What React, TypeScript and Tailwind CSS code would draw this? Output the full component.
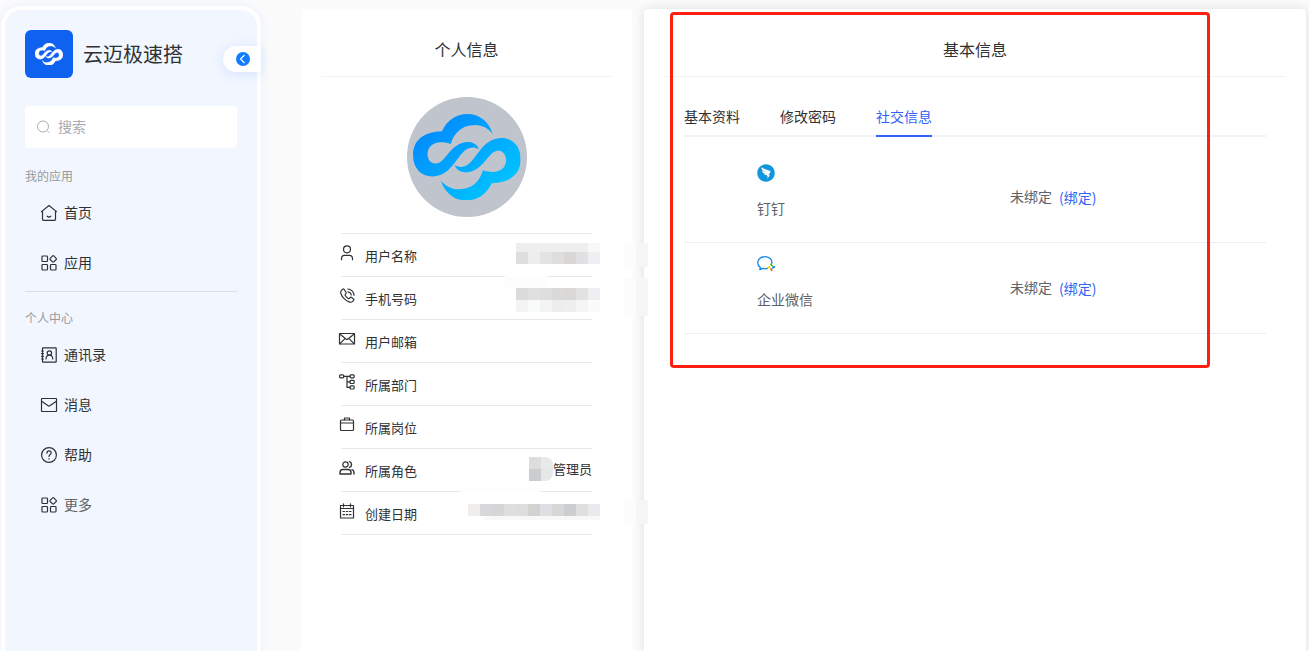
import { useState, type ReactNode } from "react";
import { AiFillDingtalkCircle } from "react-icons/ai";

function Icon({ children }: { children: ReactNode }) {
  return (
    <svg
      className="h-4 w-4 shrink-0 overflow-visible"
      viewBox="0 0 16 16"
      fill="none"
      stroke="currentColor"
      strokeWidth={1.2}
      strokeLinecap="round"
      strokeLinejoin="round"
      aria-hidden="true"
    >
      {children}
    </svg>
  );
}

const HomeIcon = (
  <Icon>
    <path d="M.5 6.6 8 .5l7.5 6.1M1.5 6v8.3a1 1 0 0 0 1 1h11a1 1 0 0 0 1-1V6M6.2 11.2c.9.8 2.7.8 3.6 0" />
  </Icon>
);

const AppsIcon = (
  <Icon>
    <rect x="1" y="1" width="5.5" height="5.5" rx=".8" />
    <rect x="1" y="9.5" width="5.5" height="5.5" rx=".8" />
    <rect x="9.5" y="9.5" width="5.5" height="5.5" rx=".8" />
    <path d="M11.6.9 9.2 3.300a.9.9 0 0 0 0 1.200l2.400 2.400a.9.9 0 0 0 1.200 0l2.400-2.400a.9.9 0 0 0 0-1.200L12.800.9a.9.9 0 0 0-1.200 0z" />
  </Icon>
);

const ContactsIcon = (
  <Icon>
    <rect x="1.5" y=".8" width="13.7" height="14.4" rx=".5" />
    <path d="M.6 4h1.800M.6 6.600h1.800M.6 9.300h1.800M.6 12h1.800" />
    <circle cx="8.4" cy="6" r="2.2" />
    <path d="M5 12c.2-2.500 1.600-3.800 3.400-3.800s3.200 1.300 3.400 3.800" />
  </Icon>
);

const MessageIcon = (
  <Icon>
    <rect x=".5" y="1.5" width="15" height="13" rx=".4" />
    <path d="m1 4.500 6.200 4.300c.5.400 1.100.4 1.600 0L15 4.500" />
  </Icon>
);

const HelpIcon = (
  <Icon>
    <circle cx="8" cy="8" r="7.4" />
    <path d="M5.900 6.200C6 4.700 6.800 3.900 8 3.900s2.200.8 2.200 2c0 1.500-2.200 1.800-2.200 3.600M8 11.600v.4" />
  </Icon>
);

const UserIcon = (
  <Icon>
    <circle cx="8" cy="4.3" r="3.5" />
    <path d="M2.500 14.700v-1.200c0-2 1.300-3.200 3.100-3.200h4.800c1.800 0 3.100 1.200 3.100 3.200v1.200" />
  </Icon>
);

const PhoneIcon = (
  <Icon>
    <path d="M3.700 1.200 2.200 2.600C.9 3.900 2 7.500 5.200 10.700s6.900 4.300 8.200 3l1.200-1.300c.4-.4.4-1-.1-1.400l-1.800-1.500c-.4-.4-1-.4-1.400 0l-.9.9c-.3.300-.8.4-1.200.1-1.100-.7-2.300-1.900-3-3-.3-.4-.2-.9.1-1.200l.6-.7c.4-.4.4-1 0-1.400L5.100 1.300c-.4-.4-1-.4-1.400-.1z" />
    <path d="M8.800 1c3.300.2 6 2.900 6.200 6.200M9 3.800c1.700.2 3 1.500 3.200 3.200" />
  </Icon>
);

const EnvelopeIcon = (
  <Icon>
    <rect x=".5" y="2.5" width="15" height="10.5" rx=".3" />
    <path d="m.8 3 6.200 5c.6.500 1.400.5 2 0l6.200-5M1 12.600l4.500-4.500M15 12.600l-4.500-4.500" />
  </Icon>
);

const TreeIcon = (
  <Icon>
    <rect x=".6" y=".8" width="4.2" height="3" rx="1" />
    <rect x="11" y=".8" width="4.2" height="3" rx="1" />
    <rect x="11" y="6.3" width="4.2" height="3.2" rx="1" />
    <rect x="11" y="11.8" width="4.2" height="3.2" rx="1" />
    <path d="M4.800 2.300H11M8 2.300v11.100h3M8 7.900h3" />
  </Icon>
);

const BriefcaseIcon = (
  <Icon>
    <rect x="1.5" y="3" width="13" height="10.5" rx="1" />
    <path d="M5.500 3V1h5v2M1.500 6h13" />
  </Icon>
);

const RolesIcon = (
  <Icon>
    <circle cx="6.5" cy="4.5" r="2.7" />
    <path
      d="M1 14v-1.500C1 10.600 2.400 9.500 4 9.500h5c1.600 0 3 1.100 3 3V14zM10.500 1.600c1.300.4 2 1.500 2 2.900s-.7 2.500-2 2.900M13 9.700c1.200.5 2 1.500 2 2.800V14"
      strokeWidth={1.4}
    />
  </Icon>
);

const CalendarIcon = (
  <Icon>
    <rect x="1.5" y="2.5" width="13" height="12.5" />
    <path d="M4.500.8v3M11.500.8v3M1.500 5.500h13" />
    <path d="M4 8.500h1.500M7.300 8.500h1.500M10.500 8.500H12M4 11.700h1.500M7.300 11.700h1.500M10.500 11.700H12" />
  </Icon>
);

// one half of the knotted cloud; the other half is the same shape turned round
const KNOT =
  "M281 135C268 96 240 75 206 75 170 75 144 95 130 126 80 127 44 150 44 196 44 240 72 262 104 260 142 257 158 232 180 203 198 179 214 167 240 179 232 162 218 158 206 158 182 158 165 173 148 193 130 215 124 222 108 222 95 221 87 208 87 193 88 172 103 160 125 159 138 159 148 161 156 164 165 130 190 108 224 108 250 107 268 119 281 135Z";

function CloudMark({ white = false, className }: { white?: boolean; className: string }) {
  if (white) {
    return (
      <svg viewBox="44 75 320 256" className={className} fill="#fff" stroke="#fff" strokeWidth={3} aria-hidden="true">
        <path d={KNOT} />
        <path d={KNOT} transform="rotate(180 203.5 203)" />
      </svg>
    );
  }
  return (
    <svg viewBox="44 75 320 256" className={className} aria-hidden="true">
      <defs>
        <linearGradient id="cloud-fill" gradientUnits="userSpaceOnUse" x1="110" y1="100" x2="280" y2="310">
          <stop offset="0" stopColor="#008cff" />
          <stop offset="1" stopColor="#00c2ff" />
        </linearGradient>
        <clipPath id="cloud-clip">
          <path d={KNOT} />
          <path d={KNOT} transform="rotate(180 203.5 203)" />
        </clipPath>
      </defs>
      <rect x="40" y="70" width="330" height="265" fill="url(#cloud-fill)" clipPath="url(#cloud-clip)" />
    </svg>
  );
}

function WeComIcon() {
  return (
    <svg viewBox="0 0 18 18" className="h-[18px] w-[18px] overflow-visible" fill="none" aria-hidden="true">
      <path
        d="M14.800 8.500C15.500 4.500 12 1.700 7.800 1.700S.7 4.400.7 7.800c0 2 1 3.700 2.700 4.800l-.6 2.100 2.600-1.300c1.700.5 3.500.5 5.100 0"
        stroke="#1485e6"
        strokeWidth="1.3"
        strokeLinecap="round"
        strokeLinejoin="round"
      />
      <g strokeWidth="1.7" strokeLinecap="round">
        <path d="m13.900 9.300 1.200 1.500" stroke="#3fc11c" />
        <path d="m17.400 11.700-1.700 1.200" stroke="#1485e6" />
        <path d="m14.700 15.300-.8-1.300" stroke="#fb6500" />
        <path d="m11 12.700 1.500-1" stroke="#ffcc00" />
      </g>
    </svg>
  );
}

const appLinks = [
  { label: "首页", icon: HomeIcon },
  { label: "应用", icon: AppsIcon },
];

const personalLinks = [
  { label: "通讯录", icon: ContactsIcon },
  { label: "消息", icon: MessageIcon },
  { label: "帮助", icon: HelpIcon },
  { label: "更多", icon: AppsIcon, muted: true },
];

function NavItem({ label, icon, muted }: { label: string; icon: ReactNode; muted?: boolean }) {
  return (
    <li>
      <a href="#" className="flex h-[50px] items-center gap-[7px] pl-4 text-sm text-[#303133] hover:text-blue-600">
        {icon}
        <span className={muted ? "pb-0.5 text-[#606266]" : "pb-0.5"}>{label}</span>
      </a>
    </li>
  );
}

function Sidebar() {
  return (
    <aside className="relative mt-1.5 ml-px w-[260px] shrink-0 rounded-t-[20px] border-4 border-b-0 border-white bg-[#f1f6ff] px-5 pt-5 shadow-[0_0_12px_rgba(64,128,255,0.1)]">
      <div className="flex items-center gap-2.5">
        <div className="flex h-12 w-12 items-center justify-center rounded-md bg-[#0f62f0]">
          <CloudMark white className="w-7" />
        </div>
        <span className="text-xl text-[#303133]">云迈极速搭</span>
      </div>
      <button
        type="button"
        aria-label="收起菜单"
        className="absolute top-9 -right-1 flex h-[26px] w-[38px] items-center rounded-l-full bg-white pl-[13px] shadow-[0_2px_12px_rgba(64,128,255,0.15)]"
      >
        <svg viewBox="0 0 14 14" className="h-3.5 w-3.5" fill="none" aria-hidden="true">
          <circle cx="7" cy="7" r="7" fill="#127cff" />
          <path d="M8.500 3 4.500 7l4 4" stroke="#fff" strokeWidth="1.1" />
        </svg>
      </button>

      <label className="mt-7 flex h-[42px] items-center gap-[7px] rounded bg-white px-3 text-[#a8abb2]">
        <svg viewBox="0 0 14 14" className="h-3.5 w-3.5 shrink-0" fill="none" stroke="currentColor" aria-hidden="true">
          <circle cx="6" cy="6.5" r="5.5" />
          <path d="m10 10.500 2.200 2.200" />
        </svg>
        <input
          type="text"
          aria-label="搜索"
          placeholder="搜索"
          className="w-full bg-transparent pb-0.5 text-sm text-[#303133] outline-none placeholder:text-[#a8abb2]"
        />
      </label>

      <nav>
        <h2 className="mt-5 text-xs text-[#999]">我的应用</h2>
        <ul className="mt-1">
          {appLinks.map((l) => (
            <NavItem key={l.label} {...l} />
          ))}
        </ul>
        <h2 className="mt-[3px] border-t border-[#dcdfe6] pt-[18px] text-xs text-[#999]">个人中心</h2>
        <ul className="mt-1">
          {personalLinks.map((l) => (
            <NavItem key={l.label} {...l} />
          ))}
        </ul>
      </nav>
    </aside>
  );
}

function CardTitle({ children }: { children: ReactNode }) {
  return (
    <h1 className="mx-5 flex h-[68px] items-center justify-center border-b border-[#f2f2f2] pt-3 text-base text-[#303133]">
      {children}
    </h1>
  );
}

// redacted value, 12px blocks
function Mosaic({ cells }: { cells: string[] }) {
  return (
    <div className="flex">
      {cells.map((c, i) => (
        <span key={i} className={`w-3 ${c}`} />
      ))}
    </div>
  );
}

function MosaicEdge({ className }: { className: string }) {
  return (
    <div className={`absolute -right-14 z-10 flex ${className}`}>
      <span className="w-3 bg-[#fcfcfc]" />
      <span className="w-3 bg-[#f6f6f6]" />
    </div>
  );
}

const NAME_VALUE = (
  <>
    <div className="absolute top-[9px] -right-2">
      <Mosaic
        cells={[
          "h-[9px] bg-[#eeeeee]",
          "h-[9px] bg-[#eeeeee]",
          "h-[9px] bg-[#eeeeee]",
          "h-[9px] bg-[#efefef]",
          "h-[9px] bg-[#efeeee]",
          "h-[9px] bg-[#eeeeee]",
          "h-[9px] bg-[#f8f8f9]",
        ]}
      />
      <Mosaic
        cells={[
          "h-3 bg-[#dedede]",
          "h-3 bg-[#ededed]",
          "h-3 bg-[#e3e3e3]",
          "h-3 bg-[#dedede]",
          "h-3 bg-[#d8d7d5]",
          "h-3 bg-[#e1e1e3]",
          "h-3 bg-[#eeeff3]",
        ]}
      />
    </div>
    <MosaicEdge className="top-[9px] h-6" />
  </>
);

const PHONE_VALUE = (
  <>
    <span className="absolute -top-px right-[45px] h-3 w-[42px] bg-[#fdfdfd]" />
    <div className="absolute top-[11px] -right-2">
      <Mosaic
        cells={[
          "h-3 bg-[#dbdbdc]",
          "h-3 bg-[#e0e0e0]",
          "h-3 bg-[#dededf]",
          "h-3 bg-[#dadadb]",
          "h-3 bg-[#dad9d8]",
          "h-3 bg-[#e2e2e3]",
          "h-3 bg-[#eeeff3]",
        ]}
      />
      <Mosaic
        cells={[
          "h-3 bg-[#f4f4f4]",
          "h-3 bg-[#f9fbfa]",
          "h-3 bg-[#f3f3f3]",
          "h-3 bg-[#ededef]",
          "h-3 bg-[#eeeeee]",
          "h-3 bg-[#f5f5f5]",
          "h-3 bg-[#fafcfb]",
        ]}
      />
    </div>
    <MosaicEdge className="top-px h-[38px]" />
  </>
);

const ROLE_VALUE = (
  <div className="ml-auto flex items-center pb-[3px]">
    <div className="overflow-hidden rounded-r-lg">
      <Mosaic cells={["h-3 bg-[#dddddd]", "h-3 bg-[#e8eae9]"]} />
      <Mosaic cells={["h-3 bg-[#cccdcf]", "h-3 bg-[#e6e8e7]"]} />
    </div>
    <span>管理员</span>
  </div>
);

const DATE_VALUE = (
  <>
    <span className="absolute -top-1 right-[51px] h-1 w-20 bg-[#fdfdfd]" />
    <div className="absolute top-3 -right-2">
      <Mosaic
        cells={[
          "h-3 bg-[#efeeec]",
          "h-3 bg-[#d8d8da]",
          "h-3 bg-[#d6d6d6]",
          "h-3 bg-[#dedede]",
          "h-3 bg-[#dddddd]",
          "h-3 bg-[#d3d2d1]",
          "h-3 bg-[#dedfe3]",
          "h-3 bg-[#d7d7d8]",
          "h-3 bg-[#cccdcf]",
          "h-3 bg-[#dfdfdf]",
          "h-3 bg-[#e9eaed]",
        ]}
      />
      <div className="ml-4 h-1 bg-[#f8f8f8]" />
    </div>
    <MosaicEdge className="top-2 h-6" />
  </>
);

const profileRows = [
  { label: "用户名称", icon: UserIcon, value: NAME_VALUE },
  { label: "手机号码", icon: PhoneIcon, value: PHONE_VALUE },
  { label: "用户邮箱", icon: EnvelopeIcon },
  { label: "所属部门", icon: TreeIcon },
  { label: "所属岗位", icon: BriefcaseIcon },
  { label: "所属角色", icon: RolesIcon, value: ROLE_VALUE },
  { label: "创建日期", icon: CalendarIcon, value: DATE_VALUE },
];

function ProfileCard() {
  return (
    <section className="min-w-0 flex-1 rounded-t bg-white">
      <CardTitle>个人信息</CardTitle>
      <div className="mx-auto mt-5 flex h-[120px] w-[120px] items-center justify-center rounded-full bg-[#c0c4cc]">
        <CloudMark className="w-[108px]" />
      </div>
      <ul className="mx-10 mt-4 border-t border-[#e7eaec] text-[13px] text-[#303133]">
        {profileRows.map((row) => (
          <li key={row.label} className="relative flex h-[43px] items-center border-b border-[#e7eaec]">
            <span className="-ml-0.5 pb-1">{row.icon}</span>
            <span className="pt-px pl-2.5">{row.label}</span>
            {row.value}
          </li>
        ))}
      </ul>
    </section>
  );
}

const tabs = ["基本资料", "修改密码", "社交信息"];

const accounts = [
  { name: "钉钉", icon: <AiFillDingtalkCircle size={20} className="-m-px" color="#1296db" /> },
  { name: "企业微信", icon: <WeComIcon /> },
];

function BasicInfoCard() {
  const [active, setActive] = useState("社交信息");

  return (
    <section className="relative min-w-0 flex-[2] rounded-t bg-white shadow-[0_0_12px_rgba(0,0,0,0.12)]">
      <CardTitle>基本信息</CardTitle>
      <div className="mx-10 mt-5">
        <div role="tablist" className="flex h-10 gap-10 border-b-2 border-[#f2f3f9] text-sm">
          {tabs.map((t) => (
            <button
              key={t}
              type="button"
              role="tab"
              aria-selected={t === active}
              onClick={() => setActive(t)}
              className={
                t === active
                  ? "-mb-0.5 border-b-2 border-[#3063f6] text-[#3063f6]"
                  : "-mb-0.5 border-b-2 border-transparent text-[#303133]"
              }
            >
              {t}
            </button>
          ))}
        </div>
        <ul className="mt-[15px] text-sm text-[#606266]">
          {accounts.map((a) => (
            <li key={a.name} className="grid h-[91px] grid-cols-[14fr_11fr] border-b border-[#ebeef5]">
              <div className="pt-3 pl-[73px]">
                {a.icon}
                <p className="mt-4">{a.name}</p>
              </div>
              <div className="flex items-center gap-[7px] pb-0.5">
                <span>未绑定</span>
                <a href="#" className="pt-0.5 text-[#3063f6]">
                  (绑定)
                </a>
              </div>
            </li>
          ))}
        </ul>
      </div>
      <div className="pointer-events-none absolute top-[3px] left-[26px] h-[356px] w-[540px] rounded-sm border-3 border-[#ff1e12]" />
    </section>
  );
}

export default function App() {
  return (
    <div className="flex min-h-screen overflow-hidden bg-[#fbfbfb] font-['Noto_Sans_CJK_SC',sans-serif]">
      <Sidebar />
      <main className="mt-[9px] mr-[3px] ml-10 flex flex-1 gap-3">
        <ProfileCard />
        <BasicInfoCard />
      </main>
    </div>
  );
}
